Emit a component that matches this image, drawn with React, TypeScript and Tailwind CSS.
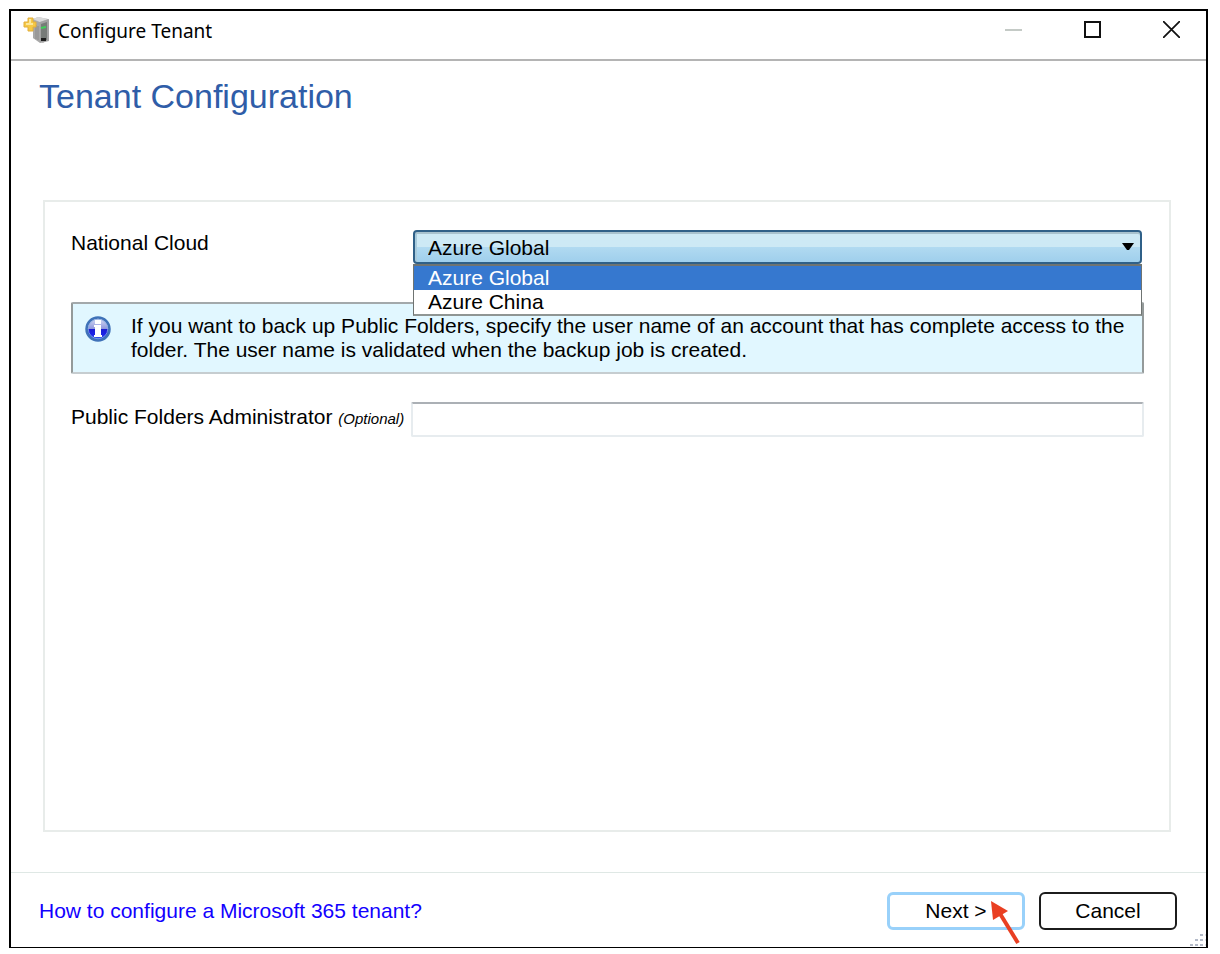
import { type ReactElement, type ReactNode, useState } from 'react';

const CLOUDS = ['Azure Global', 'Azure China'];

function TenantIcon(): ReactElement {
  return (
    <svg width="28" height="28" viewBox="0 0 28 28" aria-hidden="true">
      <path d="M10 2l5-2 10 2v21l-5 3-10-5z" fill="#b9b9b9" />
      <path d="M10 3l7 2v21l-7-5z" fill="#a8a8a8" />
      <path d="M10 2l5-2 10 2-8 3z" fill="#dadada" />
      <path d="M13 8v14M15 9v14" stroke="#8a8a8a" />
      <path d="M17 5l9-3v22l-9 2z" fill="#a3a3a3" />
      <path d="M18 7l6-2v18l-6 1z" fill="#777b78" />
      <path d="M18 11l5-1" stroke="#3fd05a" strokeWidth="2" />
      <path d="M18 21h5v3h-5z" fill="#1d1d1d" />
      <path
        d="M5 1h5v4h3v5h-3v4H5v-4H1V5h4z"
        fill="#f6c945"
        stroke="#e2ae3b"
        strokeLinejoin="round"
      />
      <path d="M6 2h2v4h2v2H3V6h3z" fill="#fce79a" />
    </svg>
  );
}

function InfoIcon(): ReactElement {
  return (
    <svg width="26" height="26" viewBox="0 0 26 26" aria-hidden="true">
      <defs>
        <linearGradient id="info-fill" x1="0" y1="0" x2="0" y2="1">
          <stop offset="0" stopColor="#dfe3f6" />
          <stop offset="0.48" stopColor="#8f98dd" />
          <stop offset="0.52" stopColor="#1a1bd2" />
          <stop offset="0.75" stopColor="#1d23e8" />
          <stop offset="1" stopColor="#3e78dd" />
        </linearGradient>
      </defs>
      <circle cx="13" cy="13" r="11.5" fill="url(#info-fill)" stroke="#3f72b8" strokeWidth="2.5" />
      <circle cx="13" cy="13" r="9.75" fill="none" stroke="#8fb0e4" strokeWidth="0.75" />
      <path d="M10 4h6v4h-6zM9 9h7v10h1v2H9v-2h1v-8H9z" fill="#fff" />
    </svg>
  );
}

function TitleBar(): ReactElement {
  return (
    <header className="flex h-[50px] items-start border-b-2 border-[#b4b4b4] pl-3">
      <div className="flex flex-1 items-center gap-[7px] pt-[5px]">
        <TenantIcon />
        <span className="font-['Noto_Sans',sans-serif] text-[19px] leading-[30px]">
          Configure Tenant
        </span>
      </div>
      <div className="flex items-center gap-[42px] pr-4">
        <button type="button" aria-label="Minimize" disabled className="p-2.5">
          <svg width="17" height="17" viewBox="0 0 17 17">
            <path d="M0 9h17" stroke="#c4cac6" strokeWidth="2" />
          </svg>
        </button>
        <button type="button" aria-label="Maximize" className="p-2.5">
          <svg width="17" height="17" viewBox="0 0 17 17">
            <path d="M1 1h15v15H1z" fill="none" stroke="#111" strokeWidth="2" />
          </svg>
        </button>
        <button type="button" aria-label="Close" className="p-2.5">
          <svg width="17" height="17" viewBox="0 0 17 17">
            <path d="M0 0l17 17M17 0L0 17" stroke="#111" strokeWidth="1.75" />
          </svg>
        </button>
      </div>
    </header>
  );
}

function CloudSelect(): ReactElement {
  const [cloud, setCloud] = useState(CLOUDS[0]);

  return (
    <div className="relative mx-[2px]">
      <select
        id="cloud"
        value={cloud}
        onChange={(event) => setCloud(event.target.value)}
        className="block h-[34px] w-full appearance-none rounded border-2 border-[#2f6088] bg-linear-to-b from-[#cde9f5] from-50% to-[#9fcfec] via-[#b1daf1] via-50% pb-[3px] pl-[13px] text-black shadow-[inset_0_2px_0_#a8c2ce,inset_2px_0_0_#a8cbdc]"
      >
        {CLOUDS.map((name) => (
          <option key={name}>{name}</option>
        ))}
      </select>
      <svg
        className="pointer-events-none absolute top-[13px] right-2 h-2 w-3"
        viewBox="0 0 12 8"
        aria-hidden="true"
      >
        <path d="M0 0h12L7 7H5z" fill="#000" />
      </svg>
      <ul
        role="listbox"
        aria-label="National Cloud"
        className="absolute inset-x-0 top-full z-10 border-x border-t-2 border-b-2 border-[#6f7472] border-b-[#8f9593] bg-white"
      >
        {CLOUDS.map((name) => (
          <li
            key={name}
            role="option"
            aria-selected={name === cloud}
            onClick={() => setCloud(name)}
            className="pl-[14px] leading-6 aria-selected:bg-[#3678cf] aria-selected:text-white"
          >
            {name}
          </li>
        ))}
      </ul>
    </div>
  );
}

function DialogButton({
  primary = false,
  children,
}: {
  primary?: boolean;
  children: ReactNode;
}): ReactElement {
  return (
    <button
      type="button"
      className={`h-[38px] w-[138px] rounded-md bg-white ${
        primary ? 'border-3 border-[#99d1fa]' : 'border-2 border-[#1c1c1c]'
      }`}
    >
      {children}
    </button>
  );
}

function ResizeGrip(): ReactElement {
  return (
    <svg className="absolute right-0 bottom-0" width="16" height="16" aria-hidden="true">
      <path d="M10 4h3M5 9h3M10 9h3M0 14h3M5 14h3M10 14h3" stroke="#b3bac8" strokeWidth="2" />
      <path d="M15 4h1M15 9h1M15 14h1" stroke="#dde1e6" strokeWidth="2" />
    </svg>
  );
}

/**
 * Tenant wizard, first page
 */
export default function App(): ReactElement {
  return (
    <div className="flex min-h-screen bg-white pt-[9px] pr-3 pb-[6px] pl-[9px] font-['Liberation_Sans',Arial,sans-serif] text-[21px] text-black">
      <div className="relative flex flex-1 flex-col border-2 border-b border-black">
        <TitleBar />

        <main className="flex flex-1 flex-col pt-[15px] pb-10">
          <h1 className="pl-7 text-[34px] leading-10 text-[#2f5da8]">Tenant Configuration</h1>

          <section className="mt-[84px] mr-[35px] ml-8 flex-1 border-2 border-[#e8ecea] pt-7 pr-[25px] pl-[26px]">
            <div className="grid grid-cols-[340px_1fr]">
              <label htmlFor="cloud" className="leading-[26px]">
                National Cloud
              </label>
              <CloudSelect />
            </div>

            <div className="mt-[38px] flex gap-5 rounded-xs border-2 border-t-[#a3a9ab] border-r-[#949a9a] border-b-[#c6cdd0] border-l-[#949a9a] bg-[#e1f7ff] px-3 py-2.5">
              <div className="shrink-0 pt-0.5">
                <InfoIcon />
              </div>
              <p className="leading-6">
                If you want to back up Public Folders, specify the user name of an account that has
                complete access to the folder. The user name is validated when the backup job is
                created.
              </p>
            </div>

            <div className="mt-7 grid grid-cols-[340px_1fr]">
              <label htmlFor="admin" className="leading-[30px] whitespace-nowrap">
                Public Folders Administrator <em className="text-[15px]">(Optional)</em>
              </label>
              <input
                id="admin"
                type="text"
                className="h-[35px] rounded-xs border-2 border-[#e7ecef] border-t-[#abb0b5] px-2 outline-none"
              />
            </div>
          </section>
        </main>

        <footer className="flex h-[75px] items-center border-t border-[#dfe8e5] pt-0.5 pr-[29px] pl-7">
          <a href="#help" className="flex-1 text-[#1200ff]">
            How to configure a Microsoft 365 tenant?
          </a>
          <div className="flex gap-[14px]">
            <div className="relative">
              <DialogButton primary>Next &gt;</DialogButton>
              <svg
                className="pointer-events-none absolute top-2 left-[103px]"
                width="32"
                height="46"
                viewBox="0 0 32 46"
                aria-hidden="true"
              >
                <path d="M9 12l19 31" stroke="#e93f22" strokeWidth="4" />
                <path d="M1 1l17 10L3 20z" fill="#e93f22" />
              </svg>
            </div>
            <DialogButton>Cancel</DialogButton>
          </div>
        </footer>

        <ResizeGrip />
      </div>
    </div>
  );
}
